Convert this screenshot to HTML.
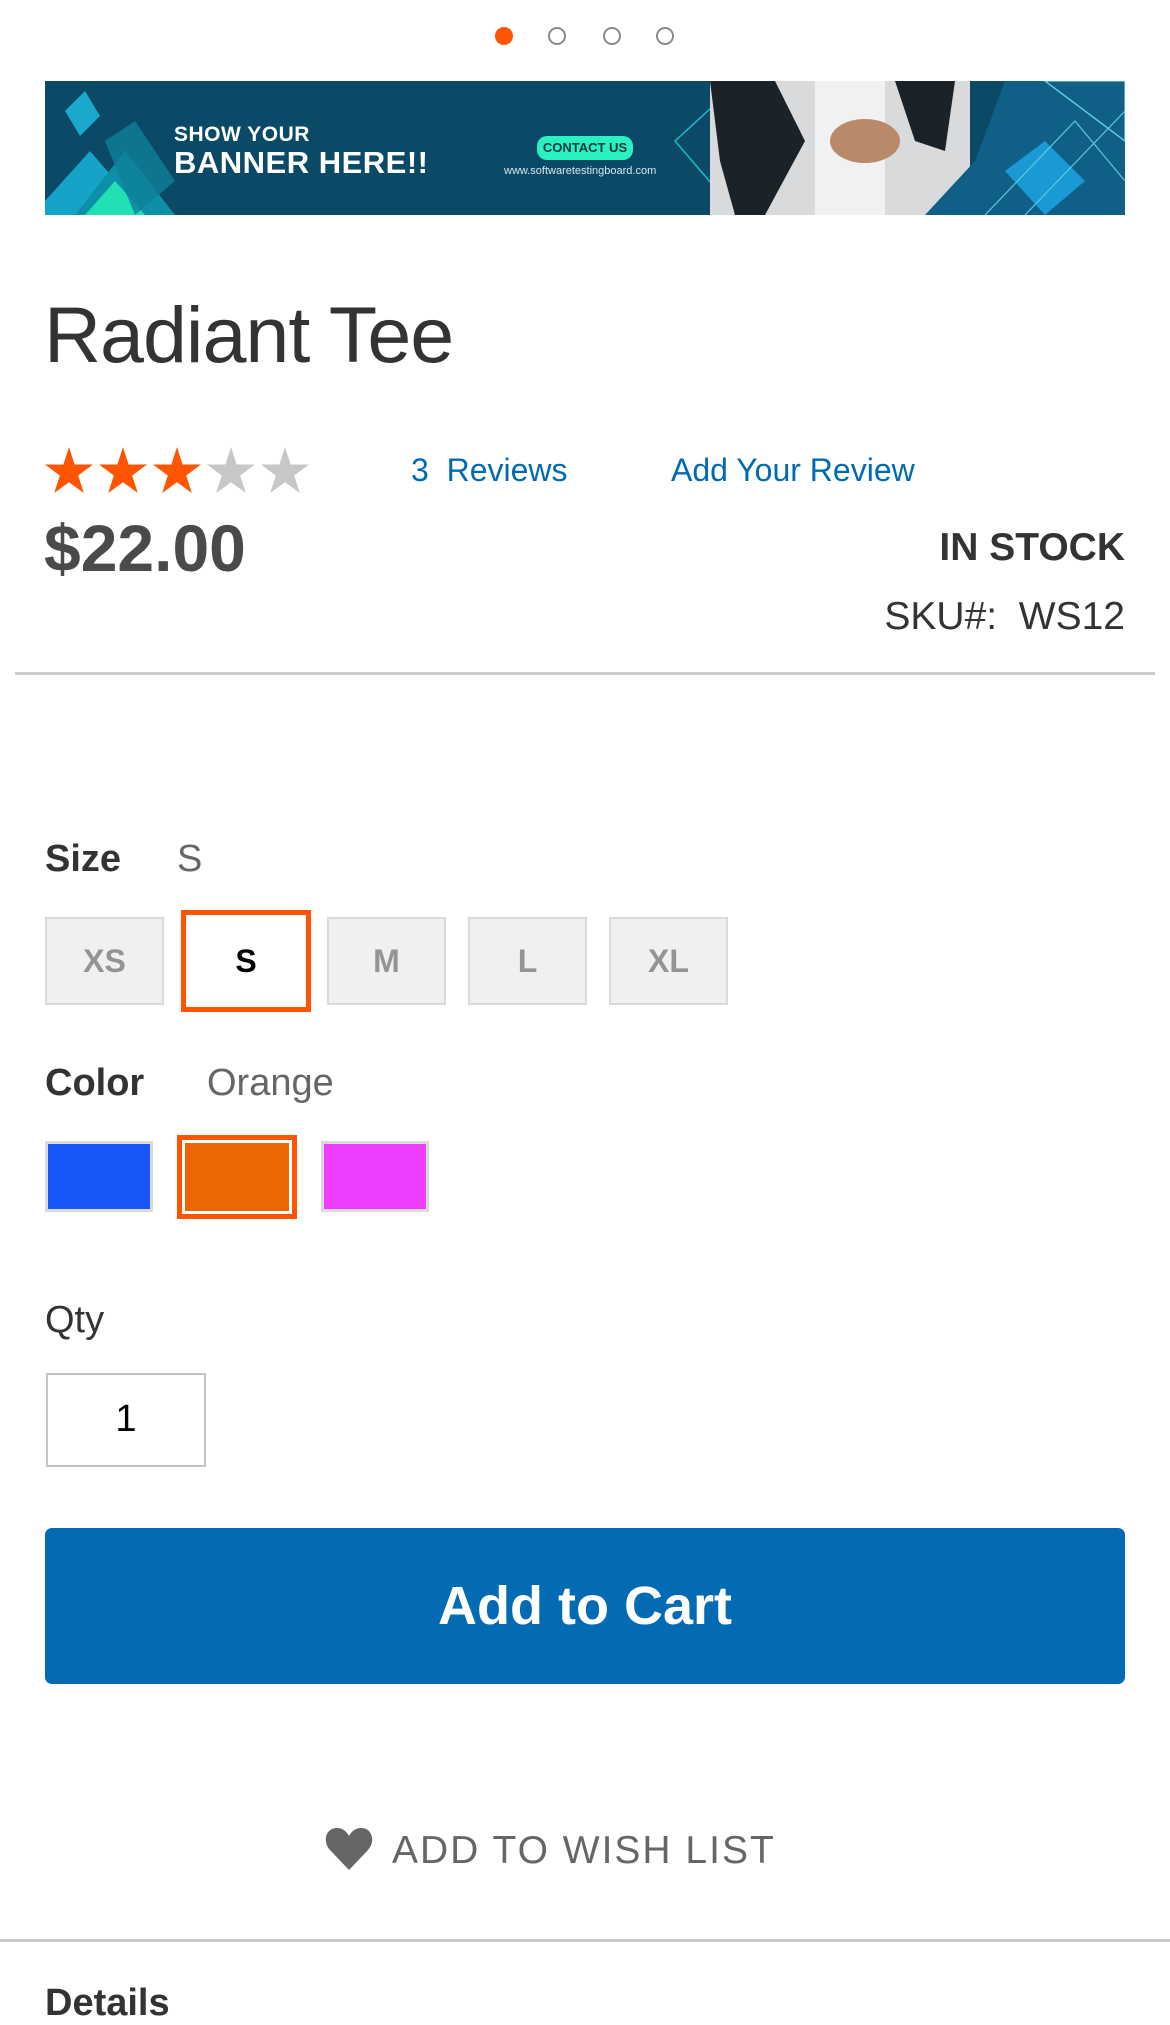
<!DOCTYPE html>
<html><head><meta charset="utf-8"><style>
*{margin:0;padding:0;box-sizing:border-box}
html,body{width:1170px;height:1992px;overflow:hidden;background:#fff;font-family:"Liberation Sans",sans-serif;color:#333}
.a{position:absolute;white-space:nowrap}
.dot{position:absolute;top:27px;width:18px;height:18px;border-radius:50%;border:2px solid #8a8a8a;background:#fff}
.sz{position:absolute;top:917px;width:119px;height:88px;background:#f0f0f0;border:2px solid #dadada;color:#949494;font-weight:bold;font-size:32px;text-align:center;line-height:84px}
.sw{position:absolute;top:1141px;width:108px;height:71px;border:3px solid #dadada}
</style></head><body>
<div class="dot" style="left:495px;background:#ff5501;border-color:#ff5501"></div>
<div class="dot" style="left:548px"></div>
<div class="dot" style="left:603px"></div>
<div class="dot" style="left:656px"></div>

<div class="a" style="left:45px;top:81px;width:1080px;height:134px;background:#0b4a66;overflow:hidden">
 <svg width="1080" height="134" style="position:absolute;left:0;top:0">
  <polygon points="0,120 45,70 100,134 0,134" fill="#14a4c8"/>
  <polygon points="30,134 80,70 130,134" fill="#0e8fa8"/>
  <polygon points="40,134 70,100 100,134" fill="#20e0b4"/>
  <polygon points="20,30 40,10 55,35 35,55" fill="#1aa8cc"/>
  <polygon points="60,60 90,40 130,100 90,134" fill="#0f7f99" opacity=".8"/>
  <polygon points="630,60 690,5 740,5 680,60 740,130 690,130" fill="none" stroke="#1dbad0" stroke-width="1.5"/>
  <rect x="665" y="0" width="260" height="134" fill="#d8dadb"/>
  <rect x="770" y="0" width="70" height="134" fill="#f1f1f1"/>
  <polygon points="665,0 730,0 760,60 720,134 690,134 675,80" fill="#1c2328"/>
  <polygon points="850,0 910,0 900,70 870,60" fill="#1c2328"/>
  <ellipse cx="820" cy="60" rx="35" ry="22" fill="#b88a6a"/>
  <polygon points="880,134 1080,134 1080,0 960,0 930,80" fill="#0f5f86"/>
  <polygon points="960,90 1000,60 1040,100 1000,134" fill="#1a9ad4"/>
  <polygon points="1000,0 1080,0 1080,60" fill="none" stroke="#5fc8e0" stroke-width="1.5"/>
  <path d="M940 134 L1030 40 L1080 100 M980 134 L1080 30" stroke="#5fc8e0" stroke-width="1.2" fill="none"/>
 </svg>
 <div class="a" style="left:129px;top:42px;color:#fff;font-weight:bold;font-size:21px;letter-spacing:.5px">SHOW YOUR</div>
 <div class="a" style="left:129px;top:64px;color:#fff;font-weight:bold;font-size:31px;letter-spacing:.5px">BANNER HERE!!</div>
 <div class="a" style="left:492px;top:55px;width:96px;height:24px;border-radius:10px;background:#2bf0c0;color:#0b3a40;font-weight:bold;font-size:13px;text-align:center;line-height:24px">CONTACT US</div>
 <div class="a" style="left:459px;top:84px;color:#d8e6ee;font-size:11px">www.softwaretestingboard.com</div>
</div>

<div class="a" style="left:44px;top:289px;font-size:79px;color:#333;letter-spacing:-1px">Radiant Tee</div>

<svg class="a" style="left:45px;top:447px" width="270" height="48" viewBox="0 0 270 48">
 <defs><polygon id="st" points="24,0 29.6,17.5 48,17.5 33.2,28.5 38.8,46 24,35.2 9.2,46 14.8,28.5 0,17.5 18.4,17.5"/></defs>
 <use href="#st" x="0" fill="#ff5501"/><use href="#st" x="54" fill="#ff5501"/><use href="#st" x="108" fill="#ff5501"/>
 <use href="#st" x="162" fill="#c7c7c7"/><use href="#st" x="216" fill="#c7c7c7"/>
</svg>
<div class="a" style="left:411px;top:452px;font-size:32px;color:#006bb4">3&nbsp; Reviews</div>
<div class="a" style="left:671px;top:452px;font-size:32px;color:#006bb4">Add Your Review</div>

<div class="a" style="left:44px;top:510px;font-size:66px;font-weight:bold;color:#4a4a4a">$22.00</div>
<div class="a" style="right:45px;top:526px;font-size:39px;font-weight:bold;color:#333">IN STOCK</div>
<div class="a" style="right:45px;top:595px;font-size:39px;color:#333">SKU#:&nbsp; WS12</div>
<div class="a" style="left:15px;top:672px;width:1140px;height:3px;background:#ccc"></div>

<div class="a" style="left:45px;top:838px;font-size:38px;font-weight:bold;color:#333">Size</div>
<div class="a" style="left:177px;top:838px;font-size:38px;color:#666">S</div>
<div class="sz" style="left:45px">XS</div>
<div class="sz" style="left:181px;top:910px;width:130px;height:102px;background:#fff;border:5px solid #ff5501;color:#000;line-height:92px">S</div>
<div class="sz" style="left:327px">M</div>
<div class="sz" style="left:468px">L</div>
<div class="sz" style="left:609px">XL</div>

<div class="a" style="left:45px;top:1062px;font-size:38px;font-weight:bold;color:#333">Color</div>
<div class="a" style="left:207px;top:1062px;font-size:38px;color:#666">Orange</div>
<div class="sw" style="left:45px;background:#1857f7"></div>
<div class="a" style="left:177px;top:1135px;width:120px;height:84px;border:5px solid #ff5501;background:#fff;padding:3px"><div style="width:100%;height:100%;background:#eb6703"></div></div>
<div class="sw" style="left:321px;background:#ef3dff"></div>

<div class="a" style="left:45px;top:1299px;font-size:38px;color:#333">Qty</div>
<div class="a" style="left:46px;top:1373px;width:160px;height:94px;border:2px solid #c2c2c2;text-align:center;font-size:38px;line-height:88px;color:#000">1</div>

<div class="a" style="left:45px;top:1528px;width:1080px;height:156px;background:#026bb3;border-radius:7px;color:#fff;font-size:54px;font-weight:bold;text-align:center;line-height:156px">Add to Cart</div>

<svg class="a" style="left:325px;top:1828px" width="48" height="42" viewBox="0 0 48 42">
 <path d="M24 42 L5 22 C-3 13 1 0 12 0 C18 0 22 4 24 8 C26 4 30 0 36 0 C47 0 51 13 43 22 Z" fill="#666"/>
</svg>
<div class="a" style="left:392px;top:1829px;font-size:39px;color:#666;letter-spacing:2px">ADD TO WISH LIST</div>
<div class="a" style="left:0;top:1939px;width:1170px;height:3px;background:#ccc"></div>
<div class="a" style="left:45px;top:1982px;font-size:38px;font-weight:bold;color:#333">Details</div>
</body></html>
